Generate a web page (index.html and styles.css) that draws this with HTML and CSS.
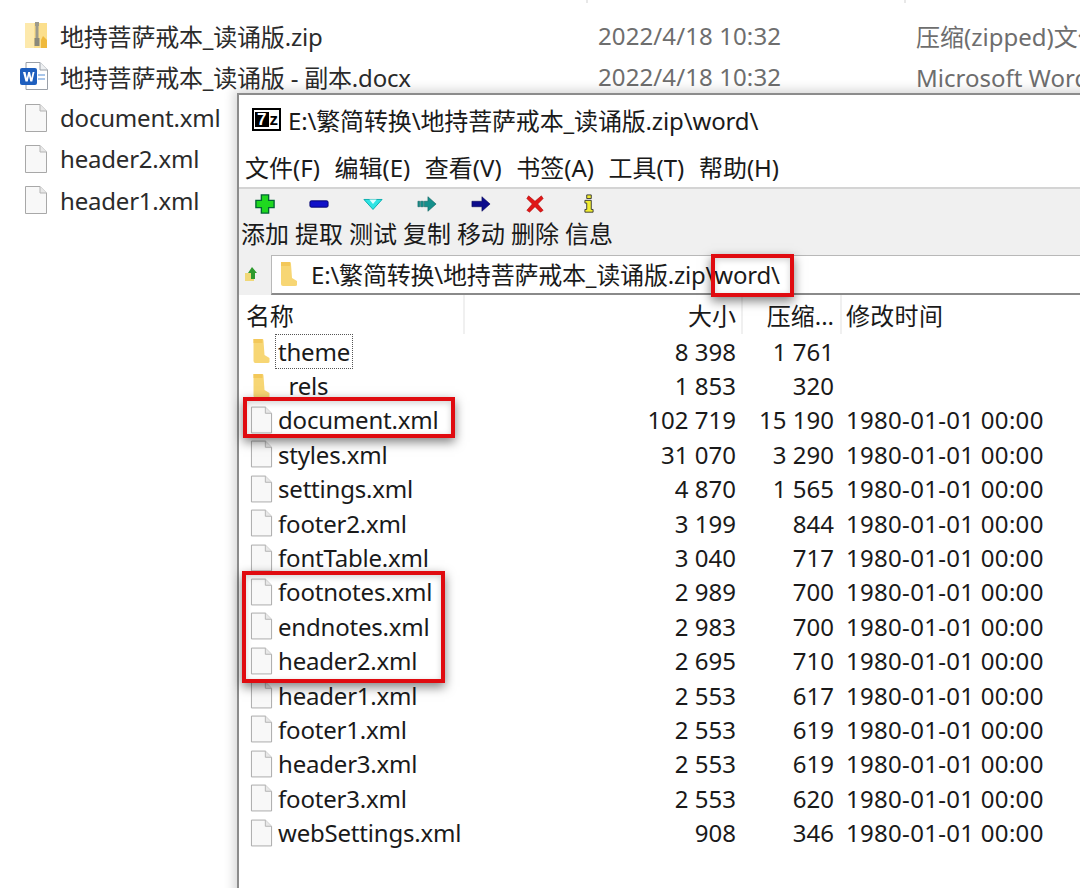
FILE: index.html
```html
<!DOCTYPE html>
<html lang="zh-CN">
<head>
<meta charset="utf-8">
<title>7-Zip</title>
<link rel="stylesheet" href="styles.css">
</head>
<body>
<svg class="defs" width="0" height="0" aria-hidden="true">
  <symbol id="file" viewBox="0 0 24 28">
    <path d="M1.5 .5H16L22.5 7V27.500H1.500Z" fill="#f8f8f8" stroke="#a8a8a8"/>
    <path d="M16 .5V7H22.500" fill="#e8e8e8" stroke="#b4b4b4"/>
  </symbol>
  <symbol id="folder" viewBox="0 0 20 28">
    <path d="M2 2H11Q12 2 12 4L13 18L18 21V25Q18 26 16 26H4Q2 26 2 24Z" fill="#f7d674"/>
    <path d="M2 2H11V6H2Z" fill="#f3c85a"/>
  </symbol>
</svg>

<ul class="explorer">
  <li class="ex-row">
    <svg class="ex-icon" viewBox="0 0 24 28"><path d="M1 2H23V27H1Z" fill="#fbdf8d"/><path d="M1 2H10V27H1Z" fill="#fde9ac"/><path d="M11 1H15V5H14.500V22H11.500V5H11Z" fill="#9c9a8c"/><path d="M10.500 17H15.500V25H10.500Z" fill="#8a897c"/><path d="M19 15L23 19V27H17V19Z" fill="#efb93c"/></svg>
    <span class="ex-name">地持菩萨戒本_读诵版.zip</span><span class="ex-date">2022/4/18 10:32</span><span class="ex-type">压缩(zipped)文件夹</span>
  </li>
  <li class="ex-row">
    <svg class="ex-icon ex-word" viewBox="0 0 28 28"><path d="M6 .5H20L27.500 8V27.500H6Z" fill="#fff" stroke="#9aa0a8"/><path d="M20 .5V8H27.500" fill="#eef0f2" stroke="#9aa0a8"/><path d="M18 12H25V14H18ZM18 16H25V18H18Z" fill="#a9c6ea"/><rect y="6" width="17" height="17" rx="2" fill="#1e5fbe"/><path d="M3 10H5.500L6.800 16L8.200 10H10L11.300 16L12.700 10H14.500L12.300 19.500H10.300L9 14L7.700 19.500H5.500Z" fill="#fff"/></svg>
    <span class="ex-name">地持菩萨戒本_读诵版 - 副本.docx</span><span class="ex-date">2022/4/18 10:32</span><span class="ex-type">Microsoft Word 文档</span>
  </li>
  <li class="ex-row"><svg class="ex-icon"><use href="#file"/></svg><span class="ex-name">document.xml</span></li>
  <li class="ex-row"><svg class="ex-icon"><use href="#file"/></svg><span class="ex-name">header2.xml</span></li>
  <li class="ex-row"><svg class="ex-icon"><use href="#file"/></svg><span class="ex-name">header1.xml</span></li>
</ul>

<section class="win">
  <header class="title">
    <span class="logo"><span class="logo-7">7</span><span class="logo-z">z</span></span>
    <span class="title-text">E:\繁简转换\地持菩萨戒本_读诵版.zip\word\</span>
  </header>
  <nav class="menu">
    <span>文件(F)</span><span>编辑(E)</span><span>查看(V)</span><span>书签(A)</span><span>工具(T)</span><span>帮助(H)</span>
  </nav>
  <div class="toolbar">
    <div class="tool"><svg viewBox="0 0 22 22"><path d="M7 1H15V7H21V15H15V21H7V15H1V7H7Z" fill="#1fd81f" stroke="#063" stroke-width="1.500"/></svg><span>添加</span></div>
    <div class="tool"><svg viewBox="0 0 22 22"><rect x="1" y="7.500" width="20" height="7" rx="1.500" fill="#1010c8" stroke="#00006a"/></svg><span>提取</span></div>
    <div class="tool"><svg viewBox="0 0 22 22"><path d="M1 6H21L11 17Z" fill="#2fe4e4" stroke="#0aa"/><path d="M7 6H15L11 11Z" fill="#dff"/></svg><span>测试</span></div>
    <div class="tool"><svg viewBox="0 0 22 22"><path d="M1 8H3V14H1ZM4 8H7V14H4ZM8 8H12V3L21 11L12 19V14H8Z" fill="#15908c" stroke="#0b5a58" stroke-width=".6"/></svg><span>复制</span></div>
    <div class="tool"><svg viewBox="0 0 22 22"><path d="M1 8H12V3L21 11L12 19V14H1Z" fill="#0c0c8c" stroke="#000050" stroke-width=".6"/></svg><span>移动</span></div>
    <div class="tool"><svg viewBox="0 0 22 22"><path d="M4 2L11 8L18 2L20 5L14 11L20 18L17 20L11 14L5 20L2 18L8 11L2 5Z" fill="#e01818" stroke="#a00" stroke-width=".6"/></svg><span>删除</span></div>
    <div class="tool"><svg viewBox="0 0 22 22"><path d="M8.500 1H13.500V5H8.500ZM6.500 7H13.500V17H15.500V20H6.500V17H8.500V10H6.500Z" fill="#f2ee30" stroke="#333"/></svg><span>信息</span></div>
  </div>
  <div class="address">
    <svg class="up" viewBox="0 0 16 16"><path d="M1 7H10V15H1Z" fill="#f0d878"/><path d="M8 1L13 7H11V13H7V7H4Z" fill="#2e9a2e"/></svg>
    <div class="path"><svg class="path-folder"><use href="#folder"/></svg><span class="path-text">E:\繁简转换\地持菩萨戒本_读诵版.zip\word\</span></div>
  </div>
  <div class="list">
    <div class="row head"><span class="c-name">名称</span><span class="c-size">大小</span><span class="c-pack">压缩...</span><span class="c-date">修改时间</span></div>
    <div class="row"><span class="c-name"><svg class="fi"><use href="#folder"/></svg><span class="focus">theme</span></span><span class="c-size">8 398</span><span class="c-pack">1 761</span><span class="c-date"></span></div>
    <div class="row"><span class="c-name"><svg class="fi"><use href="#folder"/></svg>_rels</span><span class="c-size">1 853</span><span class="c-pack">320</span><span class="c-date"></span></div>
    <div class="row"><span class="c-name"><svg class="fi"><use href="#file"/></svg>document.xml</span><span class="c-size">102 719</span><span class="c-pack">15 190</span><span class="c-date">1980-01-01 00:00</span></div>
    <div class="row"><span class="c-name"><svg class="fi"><use href="#file"/></svg>styles.xml</span><span class="c-size">31 070</span><span class="c-pack">3 290</span><span class="c-date">1980-01-01 00:00</span></div>
    <div class="row"><span class="c-name"><svg class="fi"><use href="#file"/></svg>settings.xml</span><span class="c-size">4 870</span><span class="c-pack">1 565</span><span class="c-date">1980-01-01 00:00</span></div>
    <div class="row"><span class="c-name"><svg class="fi"><use href="#file"/></svg>footer2.xml</span><span class="c-size">3 199</span><span class="c-pack">844</span><span class="c-date">1980-01-01 00:00</span></div>
    <div class="row"><span class="c-name"><svg class="fi"><use href="#file"/></svg>fontTable.xml</span><span class="c-size">3 040</span><span class="c-pack">717</span><span class="c-date">1980-01-01 00:00</span></div>
    <div class="row"><span class="c-name"><svg class="fi"><use href="#file"/></svg>footnotes.xml</span><span class="c-size">2 989</span><span class="c-pack">700</span><span class="c-date">1980-01-01 00:00</span></div>
    <div class="row"><span class="c-name"><svg class="fi"><use href="#file"/></svg>endnotes.xml</span><span class="c-size">2 983</span><span class="c-pack">700</span><span class="c-date">1980-01-01 00:00</span></div>
    <div class="row"><span class="c-name"><svg class="fi"><use href="#file"/></svg>header2.xml</span><span class="c-size">2 695</span><span class="c-pack">710</span><span class="c-date">1980-01-01 00:00</span></div>
    <div class="row"><span class="c-name"><svg class="fi"><use href="#file"/></svg>header1.xml</span><span class="c-size">2 553</span><span class="c-pack">617</span><span class="c-date">1980-01-01 00:00</span></div>
    <div class="row"><span class="c-name"><svg class="fi"><use href="#file"/></svg>footer1.xml</span><span class="c-size">2 553</span><span class="c-pack">619</span><span class="c-date">1980-01-01 00:00</span></div>
    <div class="row"><span class="c-name"><svg class="fi"><use href="#file"/></svg>header3.xml</span><span class="c-size">2 553</span><span class="c-pack">619</span><span class="c-date">1980-01-01 00:00</span></div>
    <div class="row"><span class="c-name"><svg class="fi"><use href="#file"/></svg>footer3.xml</span><span class="c-size">2 553</span><span class="c-pack">620</span><span class="c-date">1980-01-01 00:00</span></div>
    <div class="row"><span class="c-name"><svg class="fi"><use href="#file"/></svg>webSettings.xml</span><span class="c-size">908</span><span class="c-pack">346</span><span class="c-date">1980-01-01 00:00</span></div>
  </div>
</section>

<div class="mark mark-word"></div>
<div class="mark mark-doc"></div>
<div class="mark mark-notes"></div>
</body>
</html>
```

FILE: styles.css
```css
* { box-sizing: border-box; }
html, body { margin: 0; height: 100%; }
body {
  width: 1080px;
  height: 888px;
  overflow: hidden;
  background: #fff;
  position: relative;
  font-family: "Noto Sans", "Noto Sans CJK SC", sans-serif;
  font-size: 24px;
  color: #1a1a1a;
}
.defs { position: absolute; }

.explorer {
  list-style: none;
  margin: 0;
  padding: 14.500px 0 0;
  background:
    linear-gradient(#e8e8e8, #e8e8e8) no-repeat 586px 0 / 2px 3px,
    linear-gradient(#e8e8e8, #e8e8e8) no-repeat 904px 0 / 2px 3px;
}
.ex-row { display: flex; align-items: center; height: 41.250px; white-space: nowrap; color: #2b2b2b; }
.ex-icon { width: 24px; height: 28px; margin-left: 24px; margin-right: 12px; flex: none; }
.ex-word { width: 28px; margin-left: 20px; }
.ex-name { width: 538px; flex: none; letter-spacing: -.2px; }
.ex-date { width: 318px; flex: none; color: #6e6e6e; letter-spacing: .1px; }
.ex-type { color: #6e6e6e; }

.win {
  position: absolute;
  left: 237px;
  top: 93px;
  width: 860px;
  height: 810px;
  background: #fff;
  border: 2px solid #8c8c8c;
  border-right: 0;
  box-shadow: -3px -3px 10px rgba(0, 0, 0, .16);
  display: flex;
  flex-direction: column;
}
.title { height: 49px; display: flex; align-items: center; gap: 7px; padding-left: 13px; white-space: nowrap; }
.title-text { letter-spacing: -.15px; }
.logo { width: 29px; height: 23px; border: 2px solid #000; display: flex; align-items: center; padding: 1px; gap: 1px; flex: none; font-family: "Liberation Sans", sans-serif; font-weight: 700; font-size: 17px; line-height: 1; }
.logo-7 { background: #000; color: #fff; width: 14px; height: 15px; display: flex; align-items: center; justify-content: center; }
.logo-z { color: #000; }
.menu { height: 43px; display: flex; gap: 14.600px; padding: 2px 0 0 6px; align-items: center; white-space: nowrap; }
.toolbar { height: 68px; background: #f0f0f0; border-top: 2px solid #d4d4d4; display: flex; padding-left: 2px; }
.tool { width: 54px; display: flex; flex-direction: column; align-items: flex-start; white-space: nowrap; padding-top: 5px; }
.tool svg { width: 20px; height: 20px; flex: none; margin-left: 14px; }
.tool span { line-height: 34px; margin-top: 3px; }
.address { height: 40px; background: #f0f0f0; display: flex; align-items: stretch; }
.up { width: 16px; height: 16px; margin: 11px 11px 0 5px; flex: none; }
.path { flex: 1; background: #fff; border: 1px solid #b8b8b8; border-bottom: 2px solid #8a8a8a; display: flex; align-items: center; white-space: nowrap; padding-bottom: 2px; }
.path-folder { width: 20px; height: 28px; margin: 0 12px 0 7px; flex: none; }
.path-text { letter-spacing: -.2px; }
.list { flex: 1; }
.row { display: grid; grid-template-columns: 224px 266px 98px 1fr; height: 34.400px; align-items: center; padding-left: 7px; white-space: nowrap; }
.head {
  height: 39px;
  background:
    linear-gradient(#f0f0f0, #f0f0f0) no-repeat 224px 0 / 2px 100%,
    linear-gradient(#f0f0f0, #f0f0f0) no-repeat 502px 0 / 2px 100%,
    linear-gradient(#f0f0f0, #f0f0f0) no-repeat 601px 0 / 2px 100%;
}
.c-name { display: flex; align-items: center; letter-spacing: -.2px; }
.c-size, .c-pack { text-align: right; }
.c-date { padding-left: 12px; letter-spacing: .3px; }
.fi { width: 23px; height: 28px; margin-left: 4px; margin-right: 5px; flex: none; }
.focus { outline: 1px dotted #555; padding: 0 2px; margin-left: -2px; }

.mark {
  position: absolute;
  border: 4px solid #e00b10;
  box-shadow: 0 4px 10px rgba(0, 0, 0, .5), inset 0 2px 6px rgba(0, 0, 0, .18);
}
.mark-word { left: 711px; top: 254px; width: 83px; height: 43px; }
.mark-doc { left: 243px; top: 397px; width: 212px; height: 41px; }
.mark-notes { left: 242px; top: 571px; width: 203px; height: 112px; }
```
